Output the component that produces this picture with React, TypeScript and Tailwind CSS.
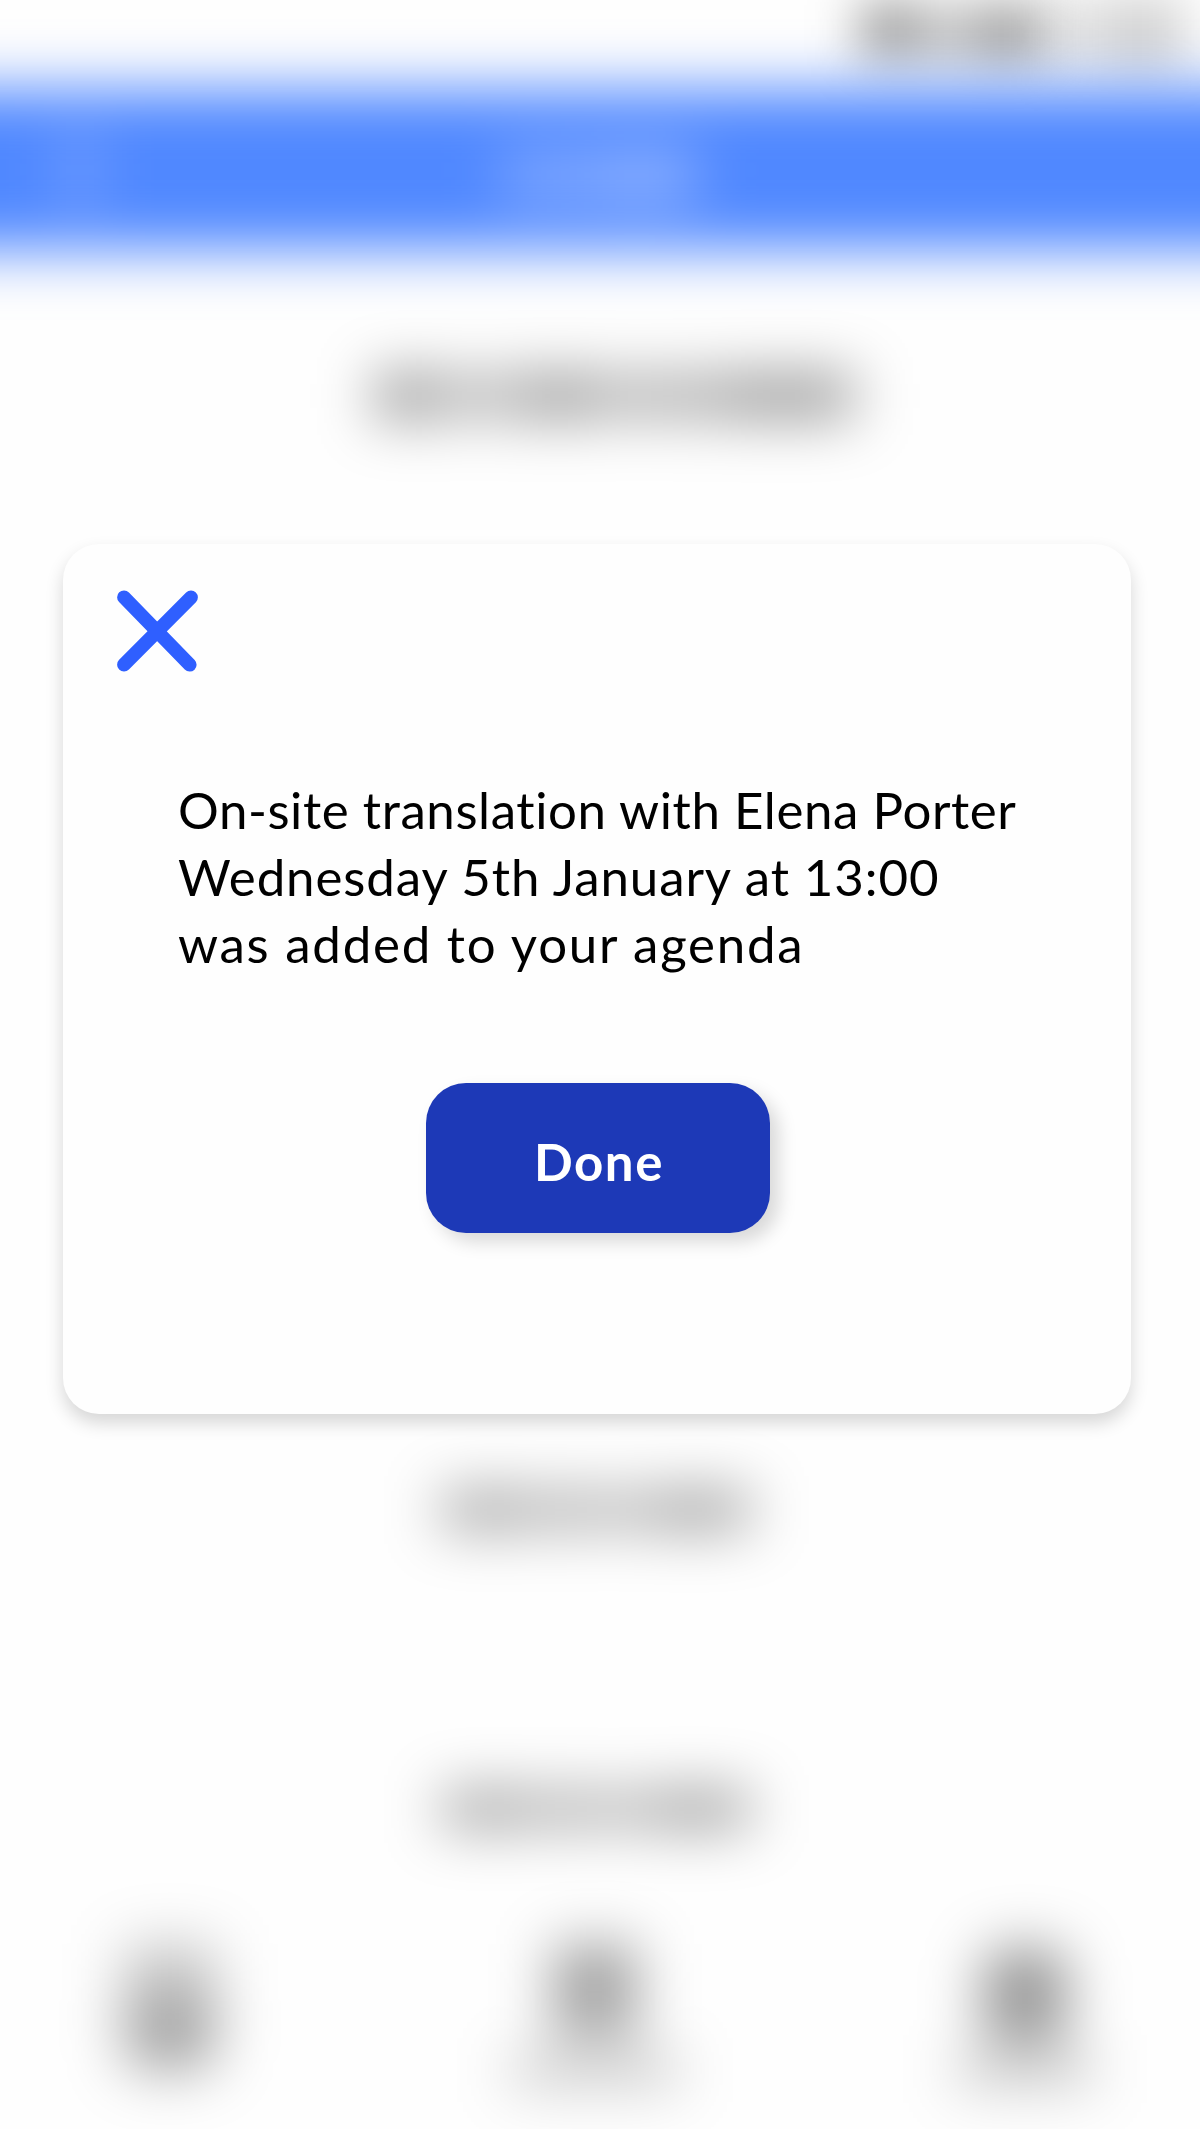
const messageLines = [
  { text: 'On-site translation with Elena Porter', spacing: 'tracking-[0.58px]' },
  { text: 'Wednesday 5th January at 13:00', spacing: 'tracking-[0.9px]' },
  { text: 'was added to your agenda', spacing: 'tracking-[1.75px]' },
];

function BlurredLabel() {
  return (
    <div className="ml-[442px] flex h-[34px] w-[308px] shrink-0 bg-black/31 blur-[29px]">
      <div className="w-[80px] bg-black/16" />
      <div className="ml-[24px] w-[50px] bg-black/8" />
      <div className="ml-[56px] w-[98px] bg-black/18" />
    </div>
  );
}

function BlurredBackdrop() {
  return (
    <div aria-hidden="true" className="flex h-full flex-col">
      <div className="flex h-[89px] shrink-0 items-start">
        <div className="ml-[860px] mt-1 flex h-[62px] w-[184px] justify-between bg-black/22 blur-[25px]">
          <div className="-mt-1 h-[54px] w-[56px] bg-black/22" />
          <div className="w-[68px] bg-black/18" />
        </div>
        <div className="-mt-1 ml-1 flex h-[78px] w-[140px] justify-end bg-black/10 blur-[25px]">
          <div className="mr-2 w-[76px] bg-black/8" />
        </div>
      </div>

      <div className="-mx-24 flex h-[161px] shrink-0 items-center bg-[#5088ff] px-24 blur-[29px]">
        <div className="ml-[66px] h-[70px] w-[28px] bg-white/26" />
        <div className="ml-[408px] mt-3 flex h-[50px] w-[194px] items-center justify-end bg-white/28">
          <div className="h-[44px] w-[96px] bg-white/15" />
        </div>
      </div>

      <div className="ml-[376px] mt-[125px] flex h-[42px] w-[478px] shrink-0 bg-black/30 blur-[29px]">
        <div className="w-[50px] bg-black/24" />
        <div className="ml-[100px] w-[66px] bg-black/18" />
        <div className="ml-[46px] w-[90px] bg-black/5" />
        <div className="w-[126px] bg-black/18" />
      </div>

      <div className="mt-[1076px] flex shrink-0 flex-col gap-[265px]">
        <BlurredLabel />
        <BlurredLabel />
      </div>

      <div className="mt-[118px] flex shrink-0 items-start">
        <div className="ml-[124px] flex h-[126px] w-[92px] flex-col blur-[29px]">
          <div className="h-[54px] bg-black/22" />
          <div className="grow rounded-b-3xl bg-black/36" />
        </div>
        <div className="ml-[284px] flex w-[190px] flex-col items-center blur-[29px]">
          <div className="h-[92px] w-[84px] bg-black/37" />
          <div className="mt-[18px] h-[32px] w-[170px] bg-black/22" />
        </div>
        <div className="ml-[250px] mt-1 flex w-[170px] flex-col items-center blur-[29px]">
          <div className="h-[94px] w-[84px] rounded-3xl bg-black/42" />
          <div className="mt-[10px] h-[34px] w-[138px] bg-black/22" />
        </div>
      </div>
    </div>
  );
}

export default function App() {
  return (
    <main className="relative h-[2129px] w-[1200px] overflow-hidden bg-[#fefefe] font-['Lato',sans-serif]">
      <BlurredBackdrop />

      <div className="absolute inset-0 pl-[63px] pt-[544px]">
        <section
          role="dialog"
          className="flex h-[870px] w-[1068px] flex-col rounded-[36px] bg-[#fefefe] shadow-[0_9px_18px_rgba(0,0,0,0.16)]"
        >
          <button aria-label="Close" className="ml-[54px] mt-[46px] h-[82px] w-[82px] shrink-0">
            <svg
              viewBox="0 0 82 82"
              className="h-full w-full"
              fill="none"
              stroke="#2f5fff"
              strokeWidth="13.8"
              strokeLinecap="round"
            >
              <path d="M7 7.3 72.7 74.7M74 7.3 7 74.7" />
            </svg>
          </button>

          <p className="ml-[115px] mt-[104px] text-[51px] leading-[67px] text-black">
            {messageLines.map((line) => (
              <span key={line.text} className={`block whitespace-nowrap ${line.spacing}`}>
                {line.text}
              </span>
            ))}
          </p>

          <button className="ml-[362.5px] mt-[106px] flex h-[150px] w-[344px] shrink-0 items-center justify-center rounded-[40px] bg-[#1d39b7] pl-[3px] pt-1.5 text-[51px] font-bold leading-none tracking-[1.5px] text-white shadow-[9px_9px_18px_rgba(0,0,0,0.15)]">
            Done
          </button>
        </section>
      </div>
    </main>
  );
}
